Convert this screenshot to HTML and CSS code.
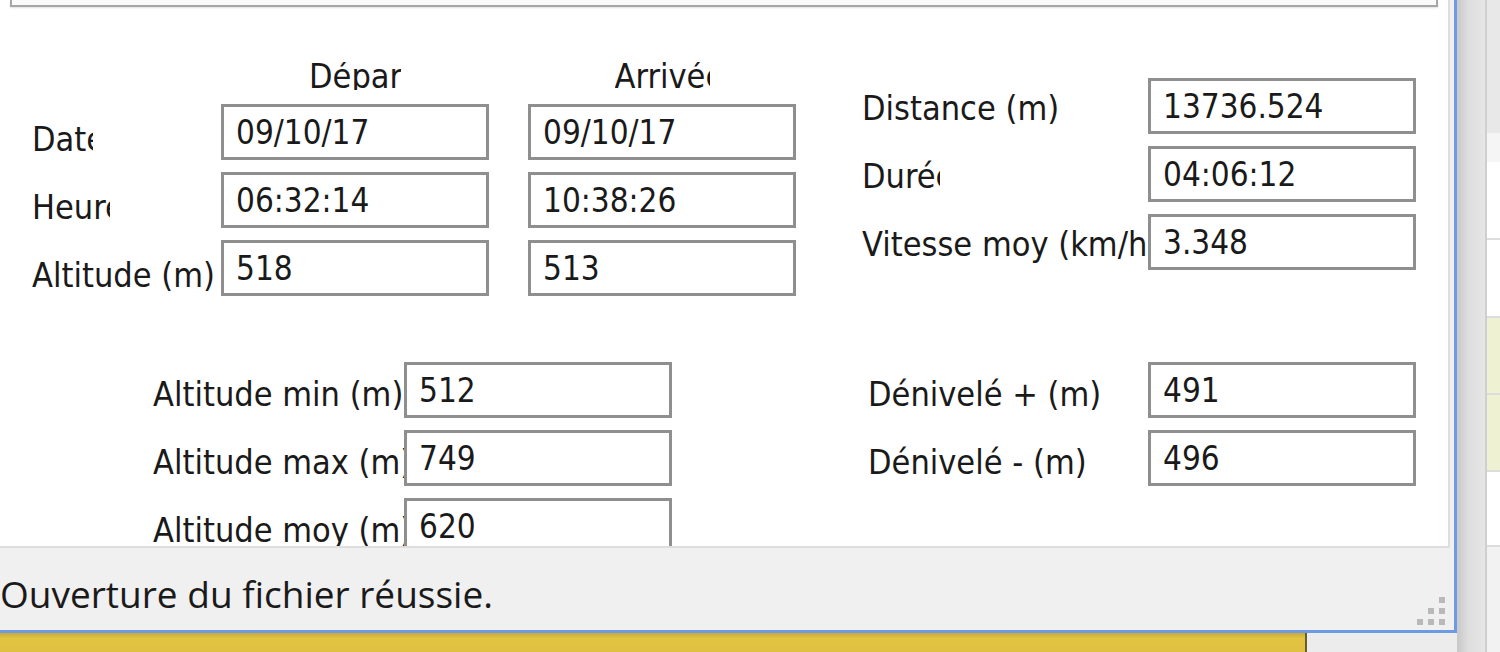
FILE: index.html
```html
<!DOCTYPE html>
<html>
<head>
<meta charset="utf-8" />
<title>Statistiques de la trace</title>
<link rel="stylesheet" href="styles.css">
</head>

<body>
<div class="desktop">
  <div class="window">
    <div class="panel">
      <div class="top-box"></div>

      <form class="form" name="stats">
        <div class="group times">
          <span></span>
          <span class="head">Départ</span>
          <span class="head head-end">Arrivée</span>

          <label class="lbl cut-date">Date</label>
          <input type="text" class="box" value="09/10/17" readonly>
          <input type="text" class="box" value="09/10/17" readonly>

          <label class="lbl cut-hour">Heure</label>
          <input type="text" class="box" value="06:32:14" readonly>
          <input type="text" class="box" value="10:38:26" readonly>

          <label class="lbl">Altitude (m)</label>
          <input type="text" class="box" value="518" readonly>
          <input type="text" class="box" value="513" readonly>
        </div>

        <div class="group totals">
          <label class="lbl">Distance (m)</label>
          <input type="text" class="box" value="13736.524" readonly>

          <label class="lbl cut-hour">Durée</label>
          <input type="text" class="box" value="04:06:12" readonly>

          <label class="lbl">Vitesse moy (km/h)</label>
          <input type="text" class="box" value="3.348" readonly>
        </div>

        <div class="group alts">
          <label class="lbl">Altitude min (m)</label>
          <input type="text" class="box" value="512" readonly>

          <label class="lbl">Altitude max (m)</label>
          <input type="text" class="box" value="749" readonly>

          <label class="lbl">Altitude moy (m)</label>
          <input type="text" class="box" value="620" readonly>
        </div>

        <div class="group denivs">
          <label class="lbl">Dénivelé + (m)</label>
          <input type="text" class="box" value="491" readonly>

          <label class="lbl">Dénivelé - (m)</label>
          <input type="text" class="box" value="496" readonly>
        </div>
      </form>
    </div>

    <div class="status">
      <span class="status-text">Ouverture du fichier réussie.</span>
      <svg class="grip" width="28" height="28" viewBox="0 0 28 28">
        <rect x="22" y="0" width="6" height="6" />
        <rect x="11" y="11" width="6" height="6" />
        <rect x="22" y="11" width="6" height="6" />
        <rect x="0" y="22" width="6" height="6" />
        <rect x="11" y="22" width="6" height="6" />
        <rect x="22" y="22" width="6" height="6" />
      </svg>
    </div>
  </div>

  <div class="side">
    <div class="shadow"></div>
    <div class="side-line"></div>
    <div class="side-app">
      <div class="side-head"></div>
      <div class="side-gap"></div>
      <div class="side-row"></div>
      <div class="side-row"></div>
      <div class="side-row side-row-hl"></div>
      <div class="side-row side-row-hl"></div>
      <div class="side-row side-row-last"></div>
    </div>
  </div>

  <div class="taskbar">
    <div class="taskbar-app"></div>
  </div>
</div>
</body>
</html>
```

FILE: styles.css
```css
body {
  margin: 0;
  background: #ececec;
  font-family: "DejaVu Sans Condensed", "DejaVu Sans", sans-serif;
  font-stretch: condensed;
  color: #1a1a1a;
}

.desktop {
  width: 1500px;
  height: 652px;
  overflow: hidden;
  display: grid;
  grid-template-columns: 1457px 1fr;
  grid-template-rows: 633px 1fr;
}

/* the dialog window */
.window {
  grid-column: 1;
  grid-row: 1;
  display: flex;
  flex-direction: column;
  background: #f0f0f0;
  border-right: 3px solid #6d9be3;
  border-bottom: 3px solid #6d9be3;
  padding-right: 4px;
}

.panel {
  height: 548px;
  flex: none;
  box-sizing: border-box;
  background: #fff;
  border-right: 2px solid #dedede;
  border-bottom: 2px solid #dedede;
  overflow: hidden;
}

.top-box {
  height: 5px;
  margin: 0 10px;
  border: 2px solid #a6a6a6;
  border-top: none;
  box-shadow: 0 1px 2px rgba(0, 0, 0, 0.12);
  background: #fafafa;
}

.form {
  display: grid;
  grid-template-columns: 830px 1fr;
  row-gap: 66px;
  padding: 55px 0 0 32px;
}

.group {
  display: grid;
  row-gap: 12px;
  grid-auto-rows: 56px;
  align-items: start;
}

.times {
  grid-template-columns: 150px 268px 268px;
  grid-template-rows: 30px;
  column-gap: 39px;
}

.totals {
  grid-template-columns: 286px 268px;
  margin-top: 16px;
}

.alts {
  grid-template-columns: 251px 268px;
  margin-left: 121px;
}

.denivs {
  grid-template-columns: 280px 268px;
  margin-left: 6px;
}

.head {
  justify-self: center;
  width: 92px;
  height: 28px;
  line-height: 28px;
  font-size: 34px;
  white-space: nowrap;
  overflow: hidden;
}

.head-end {
  width: 95px;
}

.lbl {
  font-size: 34px;
  line-height: 40px;
  white-space: nowrap;
  overflow: hidden;
  padding-top: 15px;
}

.times .lbl {
  overflow: visible;
}

.times .cut-date {
  width: 61px;
  overflow: hidden;
}

.times .cut-hour,
.cut-hour {
  width: 78px;
  overflow: hidden;
}

.totals .lbl {
  padding-top: 10px;
}

.alts .lbl,
.denivs .lbl {
  padding-top: 12px;
}

.box {
  width: 268px;
  height: 56px;
  box-sizing: border-box;
  margin: 0;
  padding: 0 0 0 12px;
  border: 3px solid #8f8f8f;
  border-radius: 0;
  background: #fff;
  font-family: inherit;
  font-stretch: condensed;
  font-size: 33px;
  color: #1a1a1a;
  outline: none;
}

/* status bar */
.status {
  flex: 1;
  display: flex;
  align-items: flex-start;
  padding-top: 24px;
  box-sizing: border-box;
}

.status-text {
  font-family: "Open Sans", sans-serif;
  font-stretch: normal;
  font-size: 37px;
  line-height: 44px;
  color: #1a1a1a;
}

.grip {
  margin-left: auto;
  margin-right: 5px;
  align-self: flex-end;
  margin-bottom: 5px;
  fill: #b9b9b9;
}

/* application behind the dialog */
.side {
  grid-column: 2;
  grid-row: 1 / span 2;
  display: flex;
}

.shadow {
  width: 28px;
  background: linear-gradient(to right, #c8c8c8, #dedede 40%, #e6e6e6);
}

.side-line {
  width: 2px;
  background: #cfcfcf;
}

.side-app {
  flex: 1;
  display: flex;
  flex-direction: column;
  background: #f2f2f2;
}

.side-head {
  height: 133px;
  background: #e8e8e8;
}

.side-gap {
  height: 29px;
  background: #f5f5f5;
}

.side-row {
  height: 76px;
  background: #fff;
  border-bottom: 2px solid #dcdcdc;
}

.side-row-hl {
  height: 75px;
  background: #eef2d2;
}

.side-row-last {
  height: 73px;
}

.taskbar {
  grid-column: 1;
  grid-row: 2;
  display: flex;
}

.taskbar-app {
  width: 1305px;
  background: linear-gradient(#c9a93a, #e2c443 30%, #e0c040);
  border-right: 2px solid #6a5d2e;
}
```
